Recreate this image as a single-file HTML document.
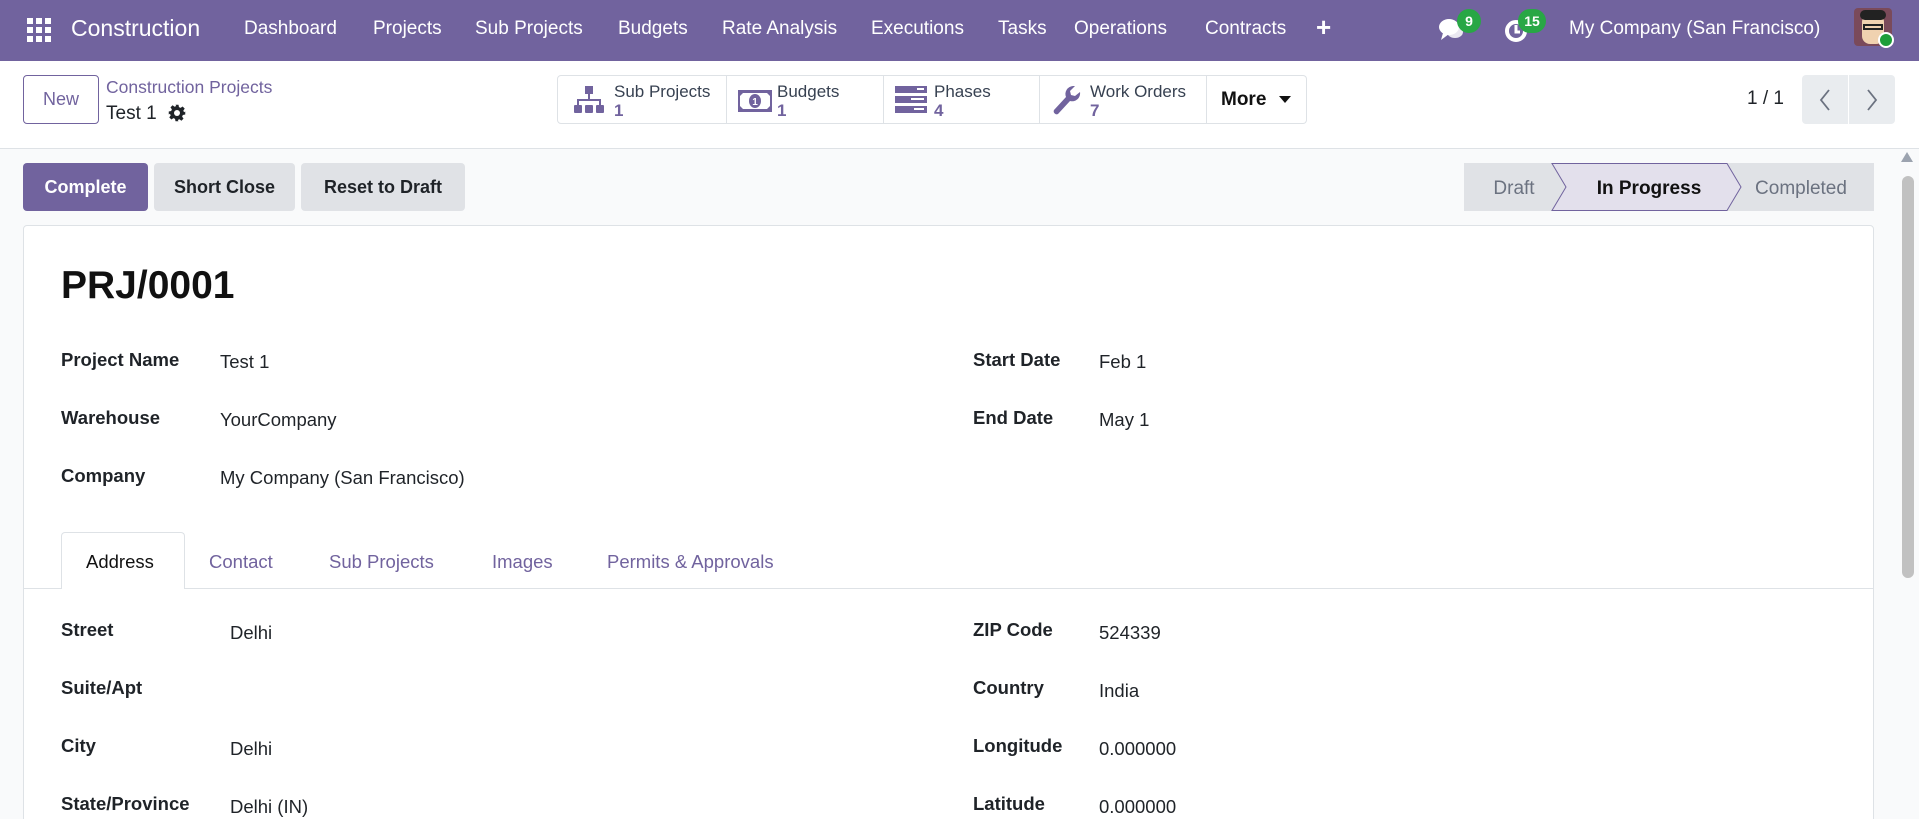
<!DOCTYPE html>
<html style="overflow:hidden;width:1919px;height:819px"><head><meta charset="utf-8"><style>
*{box-sizing:border-box;margin:0;padding:0}
body{width:1919px;height:819px;overflow:hidden;font-family:"Liberation Sans",sans-serif;color:#1f2328;background:#f9fafb;position:relative;font-size:18px}
.a{position:absolute;white-space:nowrap}
#nav{position:absolute;left:0;top:0;width:1919px;height:61px;background:#71639e;color:#fff}
#nav .a{top:18px;font-size:19px}
#cp{position:absolute;left:0;top:61px;width:1919px;height:88px;background:#fff;border-bottom:1px solid #dee2e6}
.btn{position:absolute;border-radius:4px;font-size:18px;font-weight:bold;display:flex;align-items:center;justify-content:center}
.stat{position:absolute;top:75px;height:49px;border:1px solid #dee2e6;border-left:none;background:#fff;font-size:17px;color:#374151}
.stat .l{position:absolute;top:6px}
.stat .n{position:absolute;top:25px;color:#71639e;font-weight:bold}
.lab{font-weight:bold;font-size:18.5px}
.val{font-size:18.5px}
.tab{top:551px;font-size:18.5px;color:#71639e}
</style></head><body>
<div id="nav">
<svg class="a" style="left:27px;top:18px" width="24" height="24" viewBox="0 0 24 24" fill="#fff"><rect x="0" y="0" width="6" height="6"/><rect x="9" y="0" width="6" height="6"/><rect x="18" y="0" width="6" height="6"/><rect x="0" y="9" width="6" height="6"/><rect x="9" y="9" width="6" height="6"/><rect x="18" y="9" width="6" height="6"/><rect x="0" y="18" width="6" height="6"/><rect x="9" y="18" width="6" height="6"/><rect x="18" y="18" width="6" height="6"/></svg>
<div class="a" style="left:71px;top:15px;font-size:23px">Construction</div>
<div class="a" style="left:244px">Dashboard</div>
<div class="a" style="left:373px">Projects</div>
<div class="a" style="left:475px">Sub Projects</div>
<div class="a" style="left:618px">Budgets</div>
<div class="a" style="left:722px">Rate Analysis</div>
<div class="a" style="left:871px">Executions</div>
<div class="a" style="left:998px">Tasks</div>
<div class="a" style="left:1074px">Operations</div>
<div class="a" style="left:1205px">Contracts</div>
<div class="a" style="left:1316px;top:12px;font-size:26px;font-weight:bold">+</div>
<svg class="a" style="left:1438px;top:17px" width="28" height="26" viewBox="0 0 28 26" fill="#fff"><ellipse cx="11" cy="10" rx="10" ry="8"/><path d="M5 16 L3 23 L11 17Z"/><ellipse cx="17" cy="15" rx="8" ry="6" opacity=".85"/></svg>
<div class="a" style="left:1457px;top:9px;width:24px;height:24px;border-radius:12px;background:#28a745;font-size:14px;font-weight:bold;text-align:center;line-height:24px">9</div>
<svg class="a" style="left:1504px;top:19px" width="24" height="24" viewBox="0 0 24 24"><circle cx="12" cy="12" r="9" fill="none" stroke="#fff" stroke-width="4"/><path d="M12 6V13H16" stroke="#fff" stroke-width="3" fill="none"/></svg>
<div class="a" style="left:1518px;top:9px;width:28px;height:24px;border-radius:12px;background:#28a745;font-size:14px;font-weight:bold;text-align:center;line-height:24px">15</div>
<div class="a" style="left:1569px">My Company (San Francisco)</div>
<div class="a" style="left:1854px;top:8px;width:38px;height:38px;border-radius:4px;background:#7a4a5a;overflow:hidden"><div style="position:absolute;left:8px;top:6px;width:22px;height:30px;background:#f0d2b0;border-radius:8px"></div><div style="position:absolute;left:6px;top:2px;width:26px;height:10px;background:#222;border-radius:6px"></div><div style="position:absolute;left:9px;top:16px;width:20px;height:6px;border:2px solid #222"></div></div>
<div class="a" style="left:1878px;top:32px;width:16px;height:16px;border-radius:8px;background:#1e9e3a;border:2px solid #fff"></div>
</div>
<div id="cp">
<div class="btn" style="left:23px;top:14px;width:76px;height:49px;border:1px solid #71639e;color:#71639e;font-weight:normal;background:#fff">New</div>
<div class="a" style="left:106px;top:16px;font-size:17.5px;color:#71639e">Construction Projects</div>
<div class="a" style="left:106px;top:42px;font-size:19px">Test 1</div>
<svg class="a" style="left:168px;top:43px" width="18" height="18" viewBox="0 0 24 24" fill="#1f2328"><path d="M10 1h4l.6 3.2 2.2 1 2.7-1.9 2.8 2.8-1.9 2.7 1 2.2L23 10v4l-3.2.6-1 2.2 1.9 2.7-2.8 2.8-2.7-1.9-2.2 1L14 23h-4l-.6-3.2-2.2-1-2.7 1.9-2.8-2.8 1.9-2.7-1-2.2L1 14v-4l3.2-.6 1-2.2-1.9-2.7 2.8-2.8 2.7 1.9 2.2-1Z"/><circle cx="12" cy="12" r="4" fill="#fff"/></svg>
</div>
<div class="stat" style="left:557px;width:170px;border-left:1px solid #dee2e6;border-radius:4px 0 0 4px"><svg class="a" style="left:16px;top:10px" width="30" height="30" viewBox="0 0 30 30" fill="#71639e"><rect x="11" y="0" width="8" height="8"/><rect x="14" y="8" width="2" height="6"/><rect x="3" y="13" width="24" height="2"/><rect x="3" y="13" width="2" height="6"/><rect x="25" y="13" width="2" height="6"/><rect x="0" y="19" width="8" height="8" rx="1"/><rect x="11" y="19" width="8" height="8" rx="1"/><rect x="22" y="19" width="8" height="8" rx="1"/></svg><div class="l" style="left:56px">Sub Projects</div><div class="n" style="left:56px">1</div></div>
<div class="stat" style="left:727px;width:157px"><svg class="a" style="left:10px;top:13px" width="36" height="24" viewBox="0 0 36 24"><rect x="1" y="1" width="34" height="22" fill="#71639e"/><path d="M6 4H30L33 7V17L30 20H6L3 17V7Z" fill="#fff"/><ellipse cx="18" cy="12" rx="6" ry="7" fill="#71639e"/><text x="18" y="16" font-size="10" fill="#fff" text-anchor="middle" font-family="Liberation Sans" font-weight="bold">1</text></svg><div class="l" style="left:50px">Budgets</div><div class="n" style="left:50px">1</div></div>
<div class="stat" style="left:884px;width:156px"><svg class="a" style="left:11px;top:10px" width="32" height="28" viewBox="0 0 32 28" fill="#71639e"><rect x="0" y="0" width="32" height="7"/><rect x="0" y="10" width="32" height="7"/><rect x="0" y="20" width="32" height="7"/><rect x="22" y="2" width="7" height="2" fill="#fff"/><rect x="16" y="12" width="13" height="2" fill="#fff"/><rect x="19" y="22" width="10" height="2" fill="#fff"/></svg><div class="l" style="left:50px">Phases</div><div class="n" style="left:50px">4</div></div>
<div class="stat" style="left:1040px;width:167px"><svg class="a" style="left:11px;top:8px" width="30" height="32" viewBox="0 0 30 32"><path d="M22 2a8 8 0 0 0-7 11L3 26a3 3 0 0 0 4 4l12-13a8 8 0 0 0 10-9l-5 4-4-1-1-4 5-5z" fill="#71639e"/></svg><div class="l" style="left:50px">Work Orders</div><div class="n" style="left:50px">7</div></div>
<div class="stat" style="left:1207px;width:100px;border-radius:0 4px 4px 0;font-weight:bold;font-size:19px;color:#111"><div class="a" style="left:14px;top:13px">More</div><svg class="a" style="left:72px;top:20px" width="12" height="8"><path d="M0 0H12L6 7Z" fill="#111"/></svg></div>
<div class="a" style="left:1747px;top:88px;font-size:19px">1 / 1</div>
<div class="a" style="left:1802px;top:75px;width:93px;height:49px;background:#e9ecef;border-radius:4px"><div style="position:absolute;left:46px;top:0;width:1px;height:49px;background:#fff"></div><svg class="a" style="left:17px;top:14px" width="12" height="22"><path d="M10 1L2 11L10 21" stroke="#6b7280" stroke-width="1.8" fill="none"/></svg><svg class="a" style="left:64px;top:14px" width="12" height="22"><path d="M2 1L10 11L2 21" stroke="#6b7280" stroke-width="1.8" fill="none"/></svg></div>
<div class="btn" style="left:23px;top:163px;width:125px;height:48px;background:#71639e;color:#fff">Complete</div>
<div class="btn" style="left:154px;top:163px;width:141px;height:48px;background:#e0e2e6;color:#1f2328">Short Close</div>
<div class="btn" style="left:301px;top:163px;width:164px;height:48px;background:#e0e2e6;color:#1f2328">Reset to Draft</div>
<svg class="a" style="left:1464px;top:163px" width="410" height="48" viewBox="0 0 410 48"><rect x="0" y="0" width="410" height="48" fill="#e0e2e6"/><path d="M88 0.5H263L277 24L263 47.5H88L102 24Z" fill="#e3e0ec" stroke="#71639e" stroke-width="1"/><text x="50" y="31" font-size="19" fill="#6b7280" font-family="Liberation Sans" text-anchor="middle">Draft</text><text x="185" y="31" font-size="19" fill="#111" font-family="Liberation Sans" font-weight="bold" text-anchor="middle">In Progress</text><text x="337" y="31" font-size="19" fill="#6b7280" font-family="Liberation Sans" text-anchor="middle">Completed</text></svg>
<div class="a" style="left:23px;top:225px;width:1851px;height:600px;background:#fff;border:1px solid #dee2e6;border-radius:4px"></div>
<div class="a" style="left:1901px;top:152px;width:0;height:0;border-left:6px solid transparent;border-right:6px solid transparent;border-bottom:10px solid #9ca3af"></div>
<div class="a" style="left:1902px;top:176px;width:12px;height:402px;background:#c1c1c1;border-radius:6px"></div>
<div class="a" style="left:61px;top:264px;font-size:39px;font-weight:bold;color:#111">PRJ/0001</div>
<div class="a lab" style="left:61px;top:349px">Project Name</div><div class="a val" style="left:220px;top:351px">Test 1</div>
<div class="a lab" style="left:61px;top:407px">Warehouse</div><div class="a val" style="left:220px;top:409px">YourCompany</div>
<div class="a lab" style="left:61px;top:465px">Company</div><div class="a val" style="left:220px;top:467px">My Company (San Francisco)</div>
<div class="a lab" style="left:973px;top:349px">Start Date</div><div class="a val" style="left:1099px;top:351px">Feb 1</div>
<div class="a lab" style="left:973px;top:407px">End Date</div><div class="a val" style="left:1099px;top:409px">May 1</div>
<div class="a" style="left:24px;top:588px;width:1849px;height:1px;background:#dee2e6"></div>
<div class="a" style="left:61px;top:532px;width:124px;height:57px;background:#fff;border:1px solid #dee2e6;border-bottom:none;border-radius:4px 4px 0 0"></div>
<div class="a tab" style="left:86px;color:#111">Address</div>
<div class="a tab" style="left:209px">Contact</div>
<div class="a tab" style="left:329px">Sub Projects</div>
<div class="a tab" style="left:492px">Images</div>
<div class="a tab" style="left:607px">Permits &amp; Approvals</div>
<div class="a lab" style="left:61px;top:619px">Street</div><div class="a val" style="left:230px;top:622px">Delhi</div>
<div class="a lab" style="left:61px;top:677px">Suite/Apt</div>
<div class="a lab" style="left:61px;top:735px">City</div><div class="a val" style="left:230px;top:738px">Delhi</div>
<div class="a lab" style="left:61px;top:793px">State/Province</div><div class="a val" style="left:230px;top:796px">Delhi (IN)</div>
<div class="a lab" style="left:973px;top:619px">ZIP Code</div><div class="a val" style="left:1099px;top:622px">524339</div>
<div class="a lab" style="left:973px;top:677px">Country</div><div class="a val" style="left:1099px;top:680px">India</div>
<div class="a lab" style="left:973px;top:735px">Longitude</div><div class="a val" style="left:1099px;top:738px">0.000000</div>
<div class="a lab" style="left:973px;top:793px">Latitude</div><div class="a val" style="left:1099px;top:796px">0.000000</div>
</body></html>
